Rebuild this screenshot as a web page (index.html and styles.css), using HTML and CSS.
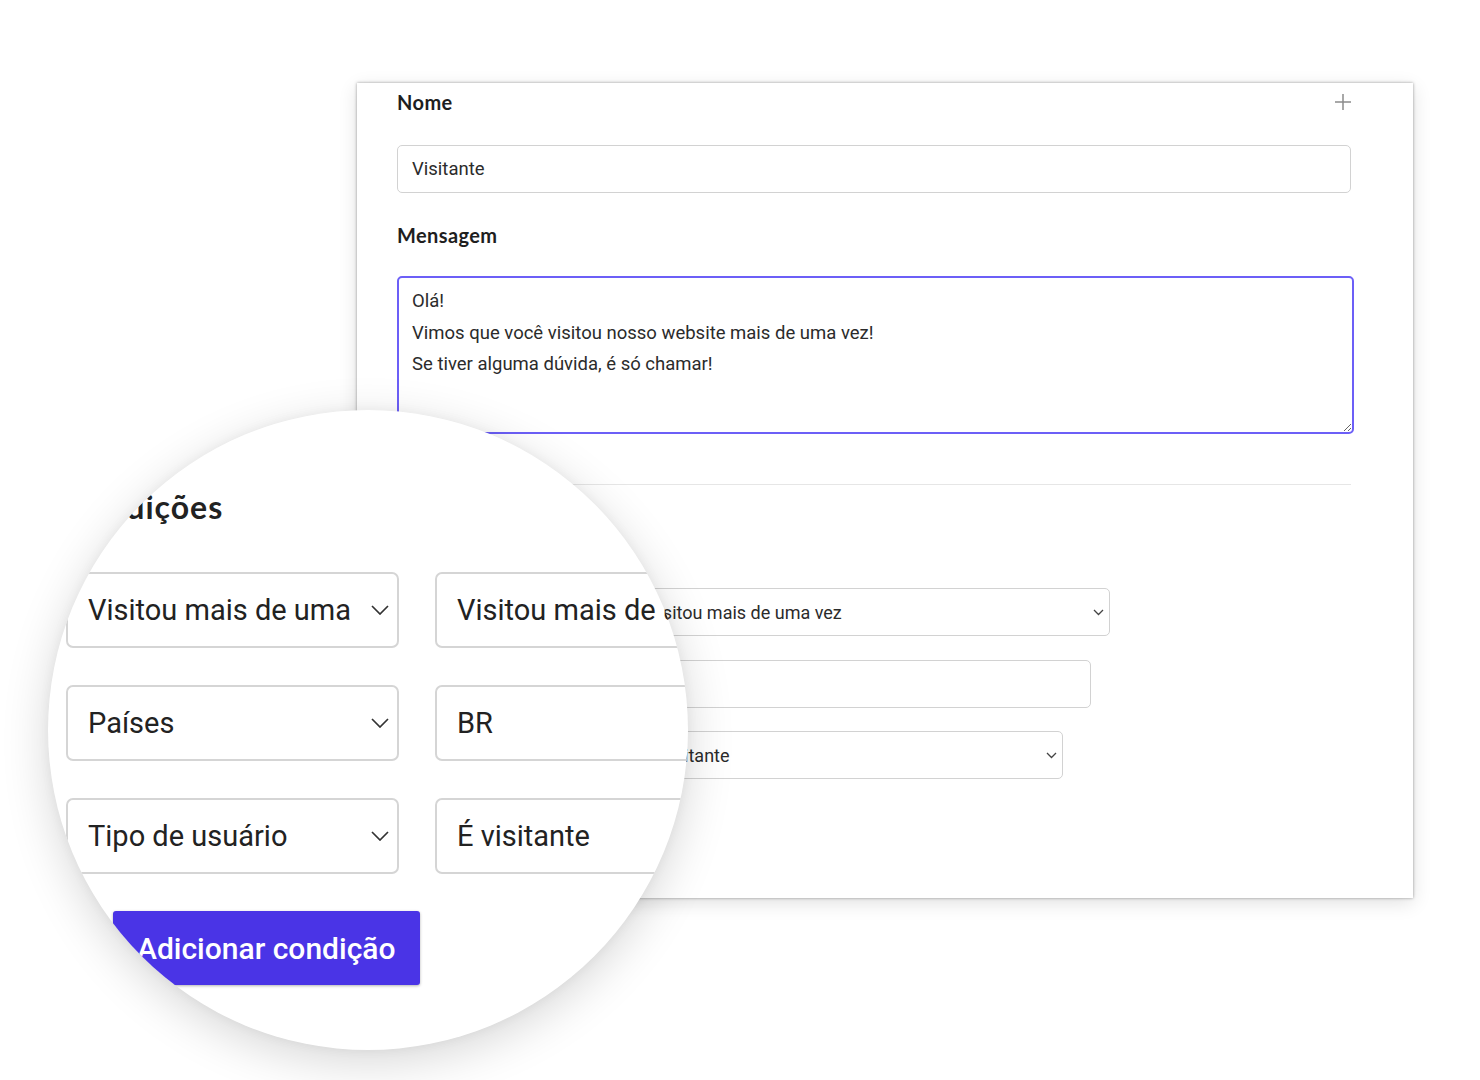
FILE: index.html
```html
<!DOCTYPE html>
<html>
	<head>
		<meta charset="UTF-8">
		<title>Mensagem para visitantes</title>
		<link rel="stylesheet" href="styles.css">
	</head>
	<body>
		<div class="stage">
			<div class="card">
				<div class="field-head">
					<span class="label">Nome</span>
					<svg class="plus" width="18" height="18" viewBox="0 0 18 18"><path d="M9 1v16M1 9h16" stroke="#8c8c8c" stroke-width="1.5" fill="none"/></svg>
				</div>
				<div class="text-input">Visitante</div>
				<div class="label msg-label">Mensagem</div>
				<textarea class="message" readonly>Olá!
Vimos que você visitou nosso website mais de uma vez!
Se tiver alguma dúvida, é só chamar!</textarea>
				<hr class="divider">
				<div class="label conds-title">Condições</div>
				<div class="cond-row">
					<div class="select small">
						<span>Visitou mais de uma</span>
						<svg width="11" height="7" viewBox="0 0 11 7"><polyline points="1,1 5.5,5.5 10,1" stroke="#444" stroke-width="1.3" fill="none"/></svg>
					</div>
					<div class="select wide-1">
						<span>Visitou mais de uma vez</span>
						<svg width="11" height="7" viewBox="0 0 11 7"><polyline points="1,1 5.5,5.5 10,1" stroke="#444" stroke-width="1.3" fill="none"/></svg>
					</div>
				</div>
				<div class="cond-row">
					<div class="select small">
						<span>Países</span>
						<svg width="11" height="7" viewBox="0 0 11 7"><polyline points="1,1 5.5,5.5 10,1" stroke="#444" stroke-width="1.3" fill="none"/></svg>
					</div>
					<div class="select wide-2"><span>BR</span></div>
				</div>
				<div class="cond-row">
					<div class="select small">
						<span>Tipo de usuário</span>
						<svg width="11" height="7" viewBox="0 0 11 7"><polyline points="1,1 5.5,5.5 10,1" stroke="#444" stroke-width="1.3" fill="none"/></svg>
					</div>
					<div class="select wide-3">
						<span>É visitante</span>
						<svg width="11" height="7" viewBox="0 0 11 7"><polyline points="1,1 5.5,5.5 10,1" stroke="#444" stroke-width="1.3" fill="none"/></svg>
					</div>
				</div>
			</div>

			<!-- lupa sobre as condições -->
			<div class="lens">
				<div class="lens-title">Condições</div>
				<div class="lens-grid">
					<div class="lens-box">
						<span>Visitou mais de uma</span>
						<svg width="18" height="10" viewBox="0 0 18 10"><polyline points="1,1 9,9 17,1" stroke="#333" stroke-width="1.7" fill="none"/></svg>
					</div>
					<div class="lens-box"><span>Visitou mais de uma vez</span></div>
					<div class="lens-box">
						<span>Países</span>
						<svg width="18" height="10" viewBox="0 0 18 10"><polyline points="1,1 9,9 17,1" stroke="#333" stroke-width="1.7" fill="none"/></svg>
					</div>
					<div class="lens-box"><span>BR</span></div>
					<div class="lens-box">
						<span>Tipo de usuário</span>
						<svg width="18" height="10" viewBox="0 0 18 10"><polyline points="1,1 9,9 17,1" stroke="#333" stroke-width="1.7" fill="none"/></svg>
					</div>
					<div class="lens-box"><span>É visitante</span></div>
				</div>
				<div class="lens-btn">Adicionar condição</div>
			</div>
		</div>
	</body>
</html>
```

FILE: styles.css
```css
* {
	margin: 0;
	padding: 0;
	box-sizing: border-box;
}
body {
	background-color: #fff;
	font-family: Roboto, "Liberation Sans", sans-serif;
	color: #222;
}
.stage {
	position: relative;
	width: 1480px;
	height: 1080px;
	padding: 83px 0 0 357px;
	overflow: hidden;
}
.card {
	width: 1056px;
	height: 815px;
	background-color: #fff;
	padding: 7px 62px 0 40px;
	box-shadow: 0 0 3px rgba(0, 0, 0, 0.38), 0 5px 18px rgba(0, 0, 0, 0.12);
}
.field-head {
	display: flex;
	justify-content: space-between;
	align-items: center;
	height: 24px;
}
.plus {
	margin-right: -1px;
}
.label {
	font-family: Lato, "Open Sans", sans-serif;
	font-weight: 700;
	font-size: 20px;
	line-height: 24px;
	letter-spacing: 0.4px;
	color: #1e1e1e;
}
.text-input {
	margin-top: 31px;
	height: 48px;
	border: 1px solid #d2d2d2;
	border-radius: 5px;
	padding: 0 14px;
	display: flex;
	align-items: center;
	font-size: 18.5px;
	color: #2b2b2b;
}
.msg-label {
	margin-top: 30px;
}
.message {
	display: block;
	margin-top: 29px;
	width: 957px;
	height: 158px;
	border: 2px solid #6c5ff7;
	border-radius: 5px;
	padding: 8px 13px;
	font-family: Roboto, "Liberation Sans", sans-serif;
	font-size: 18.5px;
	line-height: 31.5px;
	color: #2b2b2b;
	resize: vertical;
	outline: none;
	overflow: hidden;
}
.divider {
	margin-top: 50px;
	border: none;
	border-top: 1px solid #e6e6e6;
}
.conds-title {
	margin-top: 30px;
	margin-bottom: 49px;
}
.cond-row {
	display: flex;
	gap: 16px;
}
.cond-row + .cond-row {
	margin-top: 23.5px;
}
.select {
	height: 48px;
	border: 1px solid #d2d2d2;
	border-radius: 5px;
	padding: 0 5px 0 13px;
	display: flex;
	align-items: center;
	justify-content: space-between;
	font-size: 18px;
	color: #2b2b2b;
	white-space: nowrap;
	overflow: hidden;
}
.select.small {
	width: 220px;
}
.select.wide-1 {
	width: 477px;
}
.select.wide-2 {
	width: 458px;
}
.select.wide-3 {
	width: 430px;
}
.lens {
	position: absolute;
	left: 48px;
	top: 410px;
	width: 640px;
	height: 640px;
	border-radius: 50%;
	overflow: hidden;
	background-color: #fff;
	padding: 77px 0 0 18px;
	box-shadow: 0 12px 48px rgba(0, 0, 0, 0.16), 0 0 12px rgba(0, 0, 0, 0.05);
}
.lens-title {
	font-family: Lato, "Open Sans", sans-serif;
	font-weight: 700;
	font-size: 32px;
	line-height: 40px;
	letter-spacing: 1px;
	color: #222;
}
.lens-grid {
	margin-top: 45px;
	display: grid;
	grid-template-columns: 333px 333px;
	column-gap: 36px;
	row-gap: 37px;
}
.lens-box {
	height: 76px;
	border: 2px solid #d5d5d5;
	border-radius: 7px;
	padding: 0 8px 0 20px;
	display: flex;
	align-items: center;
	justify-content: space-between;
	font-size: 29px;
	color: #222;
	white-space: nowrap;
	overflow: hidden;
}
.lens-btn {
	margin: 37px 0 0 47px;
	width: fit-content;
	height: 74px;
	padding: 0 24px;
	display: flex;
	align-items: center;
	background-color: #4a34e6;
	color: #fff;
	font-size: 30px;
	font-weight: 500;
	border-radius: 3px;
	box-shadow: 0 1px 3px rgba(0, 0, 0, 0.3);
}
```
